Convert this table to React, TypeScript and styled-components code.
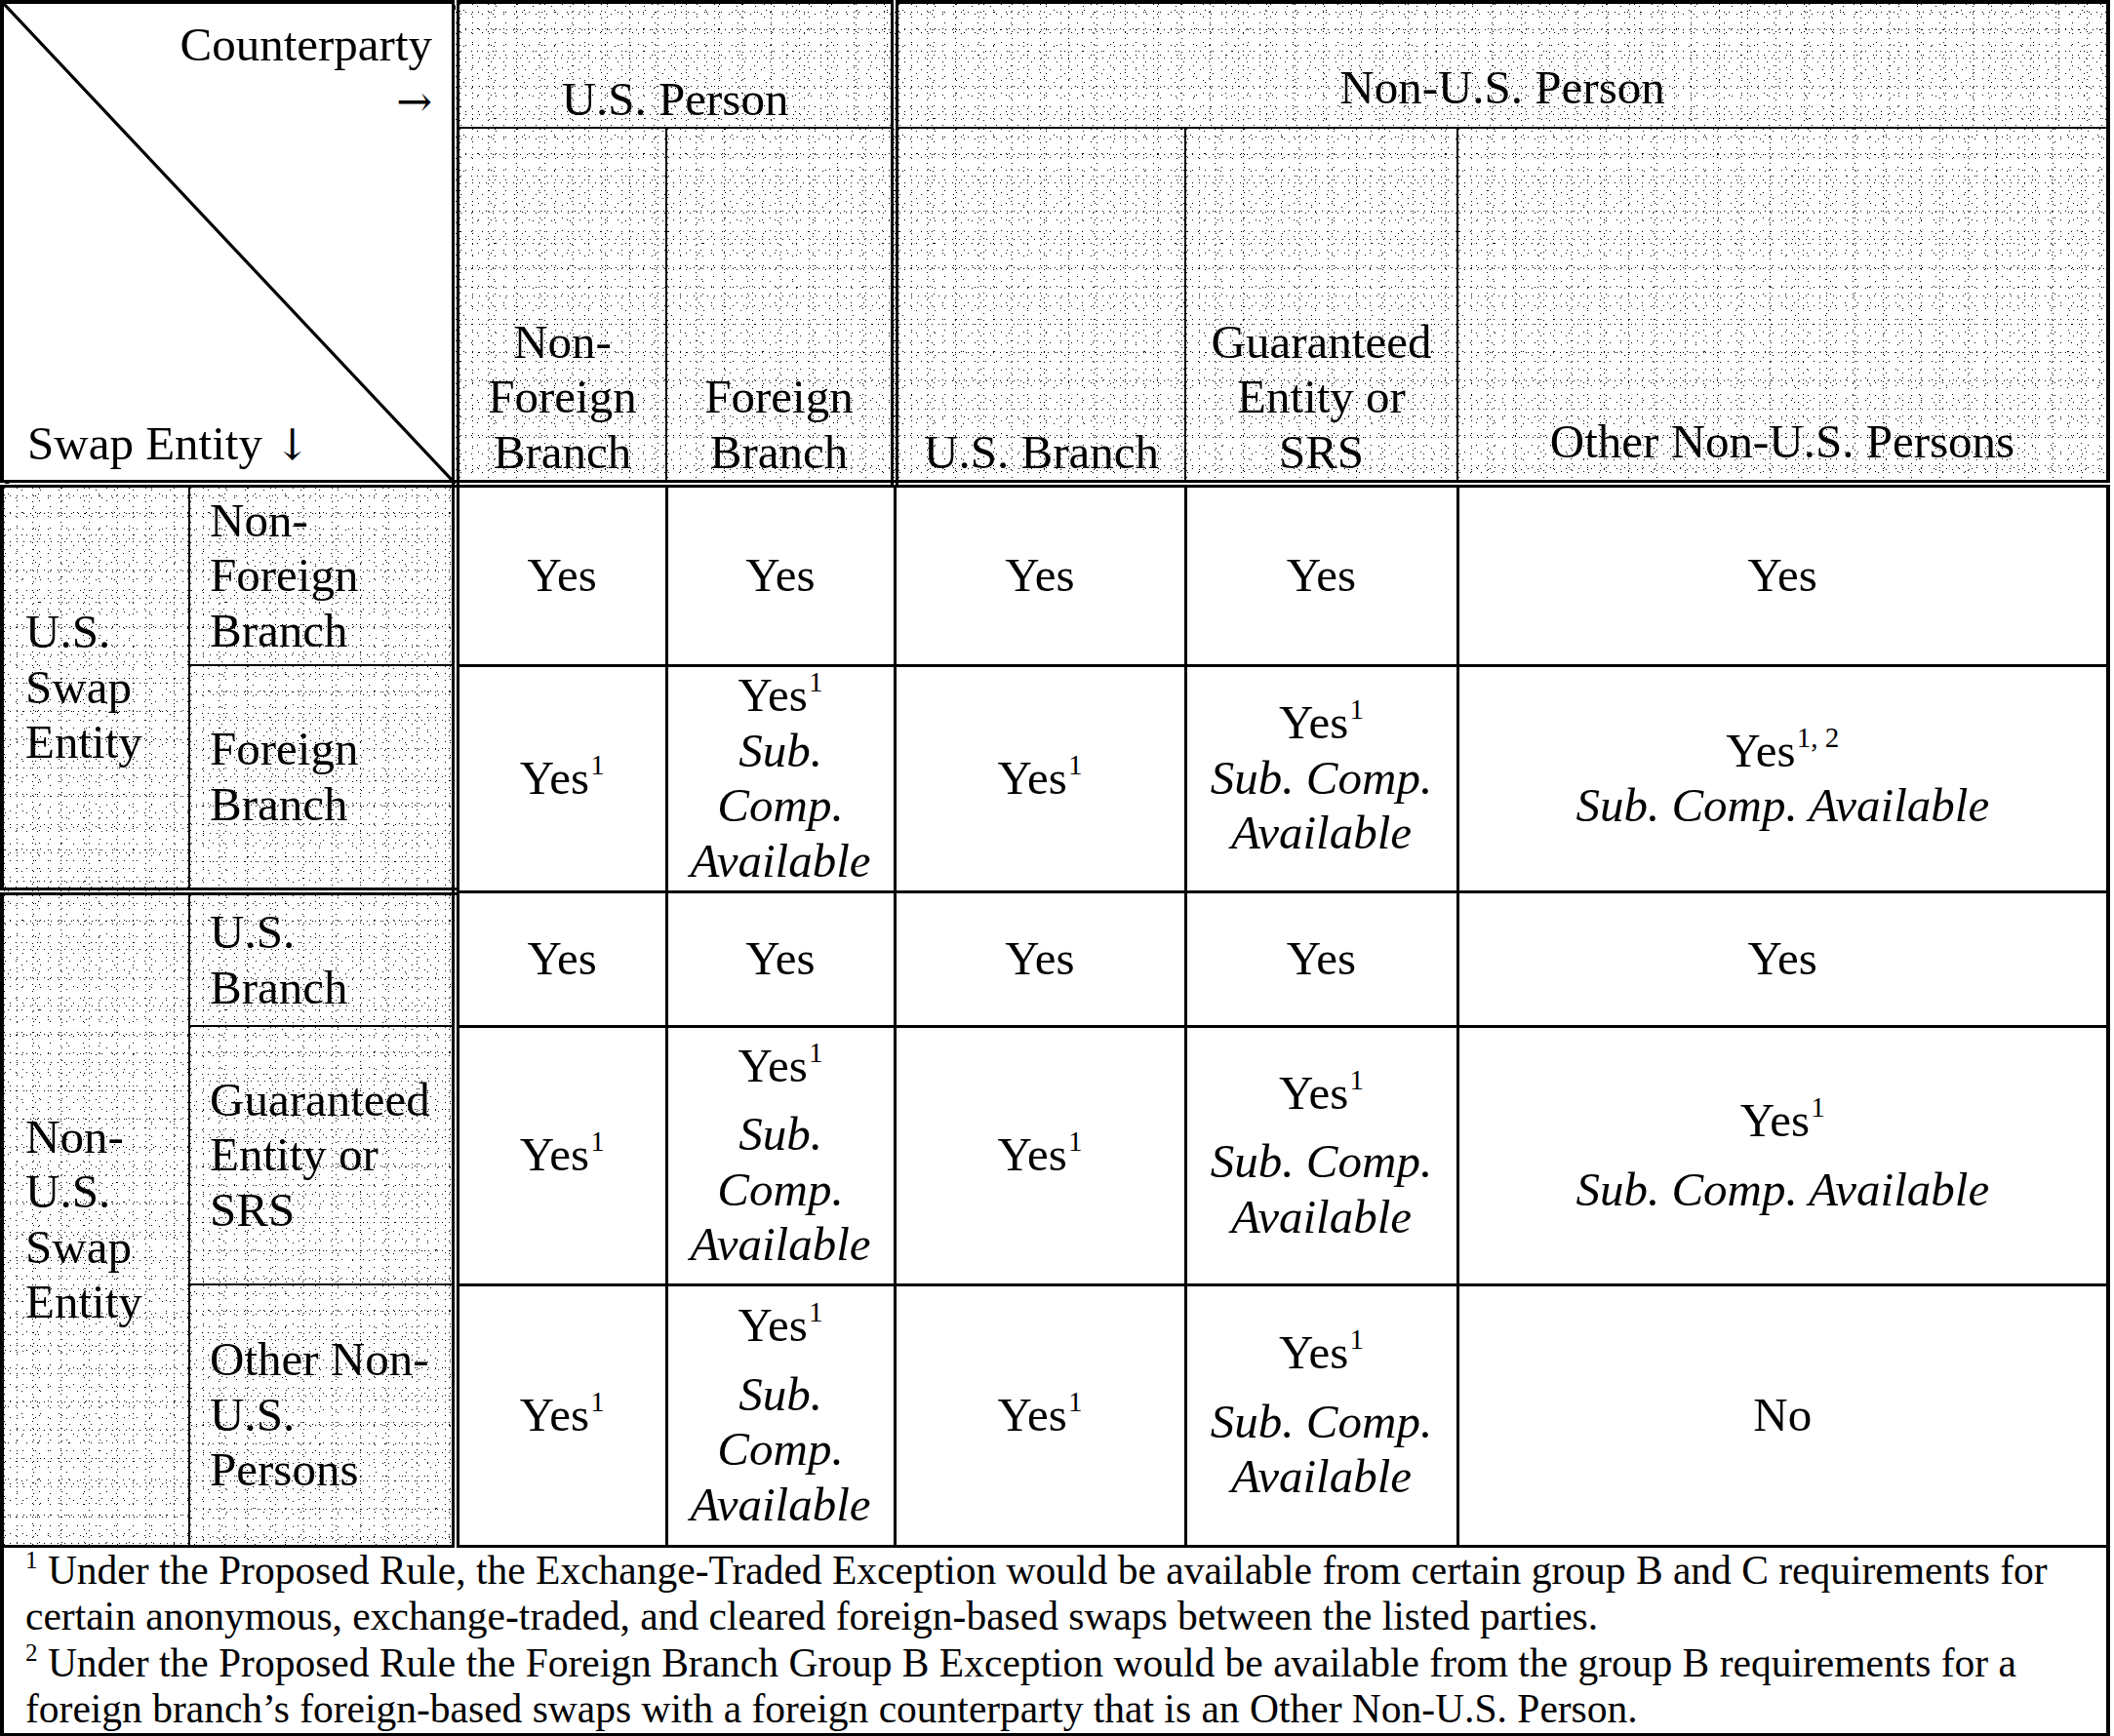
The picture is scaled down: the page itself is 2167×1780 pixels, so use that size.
import React, { ReactElement } from 'react'
import styled, { createGlobalStyle, css } from 'styled-components'

const GlobalStyle = createGlobalStyle`
  html,
  body {
    margin: 0;
    padding: 0;
    background: #fff;
  }
  body {
    font-family: 'Liberation Serif', 'Times New Roman', serif;
    color: #000;
  }
`

const DOUBLE = '8px double #000'
const THICK = '3px solid #000'
const THIN = '2px solid #000'

const dot = 'radial-gradient(circle at center, #000 0.45px, transparent 0.9px)'

// stippled shading used by header cells, layered with odd periods so it reads as noise
const stipple = css`
  background-color: #fff;
  background-image: ${Array(8).fill(dot).join(', ')};
  background-size: 13px 17px, 17px 11px, 19px 23px, 23px 13px, 11px 19px, 29px 7px, 7px 29px, 31px 37px;
  background-position: 0 0, 5px 3px, 9px 14px, 2px 7px, 7px 1px, 15px 4px, 3px 12px, 20px 25px;
`

const Table = styled.table`
  border-collapse: collapse;
  table-layout: fixed;
  width: 2163px;
  border: 4px solid #000;
  font-size: 49px;
  line-height: 56.5px;
`

const Row = styled.tr<{ $h: number }>`
  height: ${p => p.$h}px;
`

const CornerCell = styled.th`
  padding: 14px 20px 8px 24px;
  border-right: ${DOUBLE};
  border-bottom: ${DOUBLE};
  font-weight: normal;
  background: linear-gradient(
    to top right,
    transparent calc(50% - 2px),
    #000 calc(50% - 1.2px),
    #000 calc(50% + 1.2px),
    transparent calc(50% + 2px)
  );
  vertical-align: top;
`

const CornerInner = styled.div`
  height: 466px;
  display: flex;
  flex-direction: column;
  justify-content: space-between;
`

const CornerTop = styled.div`
  text-align: right;
`

const CornerBottom = styled.div`
  text-align: left;
`

const Arrow = styled.span`
  font-family: 'DejaVu Serif', serif;
  font-size: 44px;
`

const GroupHead = styled.th<{ $right?: string; $pad?: number }>`
  ${stipple}
  font-weight: normal;
  text-align: center;
  vertical-align: bottom;
  padding: 0 0 ${p => p.$pad ?? 0}px;
  border-bottom: ${THIN};
  border-right: ${p => p.$right ?? 'none'};
`

const ColHead = styled.th<{ $right?: string; $pad?: number }>`
  ${stipple}
  font-weight: normal;
  text-align: center;
  vertical-align: bottom;
  padding: 0 2px ${p => p.$pad ?? 0}px;
  border-bottom: ${DOUBLE};
  border-right: ${p => p.$right ?? 'none'};
`

const GroupLabel = styled.th<{ $bottom: string }>`
  ${stipple}
  font-weight: normal;
  text-align: left;
  vertical-align: middle;
  padding: 0 0 0 22px;
  border-right: ${THIN};
  border-bottom: ${p => p.$bottom};
`

const SubLabel = styled.th<{ $bottom: string }>`
  ${stipple}
  font-weight: normal;
  text-align: left;
  vertical-align: middle;
  padding: 0 0 0 20px;
  border-right: ${DOUBLE};
  border-bottom: ${p => p.$bottom};
`

const DataCell = styled.td<{ $last?: boolean }>`
  text-align: center;
  vertical-align: middle;
  padding: 0 4px;
  border-bottom: ${THICK};
  border-right: ${p => (p.$last ? 'none' : THICK)};
`

const Note = styled.sup`
  font-size: 29px;
  line-height: 0;
  vertical-align: baseline;
  position: relative;
  top: -20px;
  margin-left: 1px;
`

const SubComp = styled.div<{ $gap?: boolean }>`
  font-style: italic;
  margin-top: ${p => (p.$gap ? 14 : 0)}px;
`

const FootCell = styled.td`
  padding: 0 0 0 22px;
  border-top: ${THICK};
  text-align: left;
  font-size: 41.5px;
  line-height: 47.5px;
  white-space: nowrap;
`

const FootNote = styled.sup`
  font-size: 25px;
  line-height: 0;
  vertical-align: baseline;
  position: relative;
  top: -16px;
`

type Answer = { text: string; note?: string; sub?: string[]; gap?: boolean }

const Lines = ({ lines }: { lines: string[] }): ReactElement => (
  <>
    {lines.map((l, i) => (
      <React.Fragment key={i}>
        {i > 0 && <br />}
        {l}
      </React.Fragment>
    ))}
  </>
)

const AnswerBody = ({ a }: { a: Answer }): ReactElement => (
  <>
    <div>
      {a.text}
      {a.note && <Note>{a.note}</Note>}
    </div>
    {a.sub && (
      <SubComp $gap={a.gap}>
        <Lines lines={a.sub} />
      </SubComp>
    )}
  </>
)

const yes: Answer = { text: 'Yes' }
const yes1: Answer = { text: 'Yes', note: '1' }
const sub3 = ['Sub.', 'Comp.', 'Available']
const sub2 = ['Sub. Comp.', 'Available']
const sub1 = ['Sub. Comp. Available']

type Group = { lines: string[]; span: number; bottom: string }

const rows: { h: number; label: string[]; bottom: string; group?: Group; cells: Answer[] }[] = [
  {
    h: 186,
    label: ['Non-', 'Foreign', 'Branch'],
    bottom: THIN,
    group: { lines: ['U.S.', 'Swap', 'Entity'], span: 2, bottom: DOUBLE },
    cells: [yes, yes, yes, yes, yes],
  },
  {
    h: 232,
    label: ['Foreign', 'Branch'],
    bottom: DOUBLE,
    cells: [
      yes1,
      { ...yes1, sub: sub3 },
      yes1,
      { ...yes1, sub: sub2 },
      { text: 'Yes', note: '1, 2', sub: sub1 },
    ],
  },
  {
    h: 138,
    label: ['U.S.', 'Branch'],
    bottom: THIN,
    group: { lines: ['Non-', 'U.S.', 'Swap', 'Entity'], span: 3, bottom: THICK },
    cells: [yes, yes, yes, yes, yes],
  },
  {
    h: 265,
    label: ['Guaranteed', 'Entity or', 'SRS'],
    bottom: THIN,
    cells: [
      yes1,
      { ...yes1, sub: sub3, gap: true },
      yes1,
      { ...yes1, sub: sub2, gap: true },
      { ...yes1, sub: sub1, gap: true },
    ],
  },
  {
    h: 268,
    label: ['Other Non-', 'U.S.', 'Persons'],
    bottom: THICK,
    cells: [yes1, { ...yes1, sub: sub3, gap: true }, yes1, { ...yes1, sub: sub2, gap: true }, { text: 'No' }],
  },
]

const colWidths = [192, 273, 216, 234, 298, 279, 667]

const App = (): ReactElement => (
  <>
    <GlobalStyle />
    <Table>
      <colgroup>
        {colWidths.map((w, i) => (
          <col key={i} style={{ width: `${w}px` }} />
        ))}
      </colgroup>
      <thead>
        <Row $h={128}>
          <CornerCell colSpan={2} rowSpan={2}>
            <CornerInner>
              <CornerTop>
                Counterparty
                <br />
                <Arrow>→</Arrow>
              </CornerTop>
              <CornerBottom>
                Swap Entity <Arrow>↓</Arrow>
              </CornerBottom>
            </CornerInner>
          </CornerCell>
          <GroupHead colSpan={2} $right={DOUBLE}>
            U.S. Person
          </GroupHead>
          <GroupHead colSpan={3} $pad={12}>
            Non-U.S. Person
          </GroupHead>
        </Row>
        <Row $h={362}>
          <ColHead $right={THIN}>
            <Lines lines={['Non-', 'Foreign', 'Branch']} />
          </ColHead>
          <ColHead $right={DOUBLE}>
            <Lines lines={['Foreign', 'Branch']} />
          </ColHead>
          <ColHead $right={THIN}>U.S. Branch</ColHead>
          <ColHead $right={THIN}>
            <Lines lines={['Guaranteed', 'Entity or', 'SRS']} />
          </ColHead>
          <ColHead $pad={11}>Other Non-U.S. Persons</ColHead>
        </Row>
      </thead>
      <tbody>
        {rows.map((r, i) => (
          <Row key={i} $h={r.h}>
            {r.group && (
              <GroupLabel rowSpan={r.group.span} $bottom={r.group.bottom}>
                <Lines lines={r.group.lines} />
              </GroupLabel>
            )}
            <SubLabel $bottom={r.bottom}>
              <Lines lines={r.label} />
            </SubLabel>
            {r.cells.map((a, j) => (
              <DataCell key={j} $last={j === r.cells.length - 1}>
                <AnswerBody a={a} />
              </DataCell>
            ))}
          </Row>
        ))}
        <Row $h={190}>
          <FootCell colSpan={7}>
            <FootNote>1</FootNote> Under the Proposed Rule, the Exchange-Traded Exception would be available from certain
            group B and C requirements for
            <br />
            certain anonymous, exchange-traded, and cleared foreign-based swaps between the listed parties.
            <br />
            <FootNote>2</FootNote> Under the Proposed Rule the Foreign Branch Group B Exception would be available from the
            group B requirements for a
            <br />
            foreign branch’s foreign-based swaps with a foreign counterparty that is an Other Non-U.S. Person.
          </FootCell>
        </Row>
      </tbody>
    </Table>
  </>
)

export default App
